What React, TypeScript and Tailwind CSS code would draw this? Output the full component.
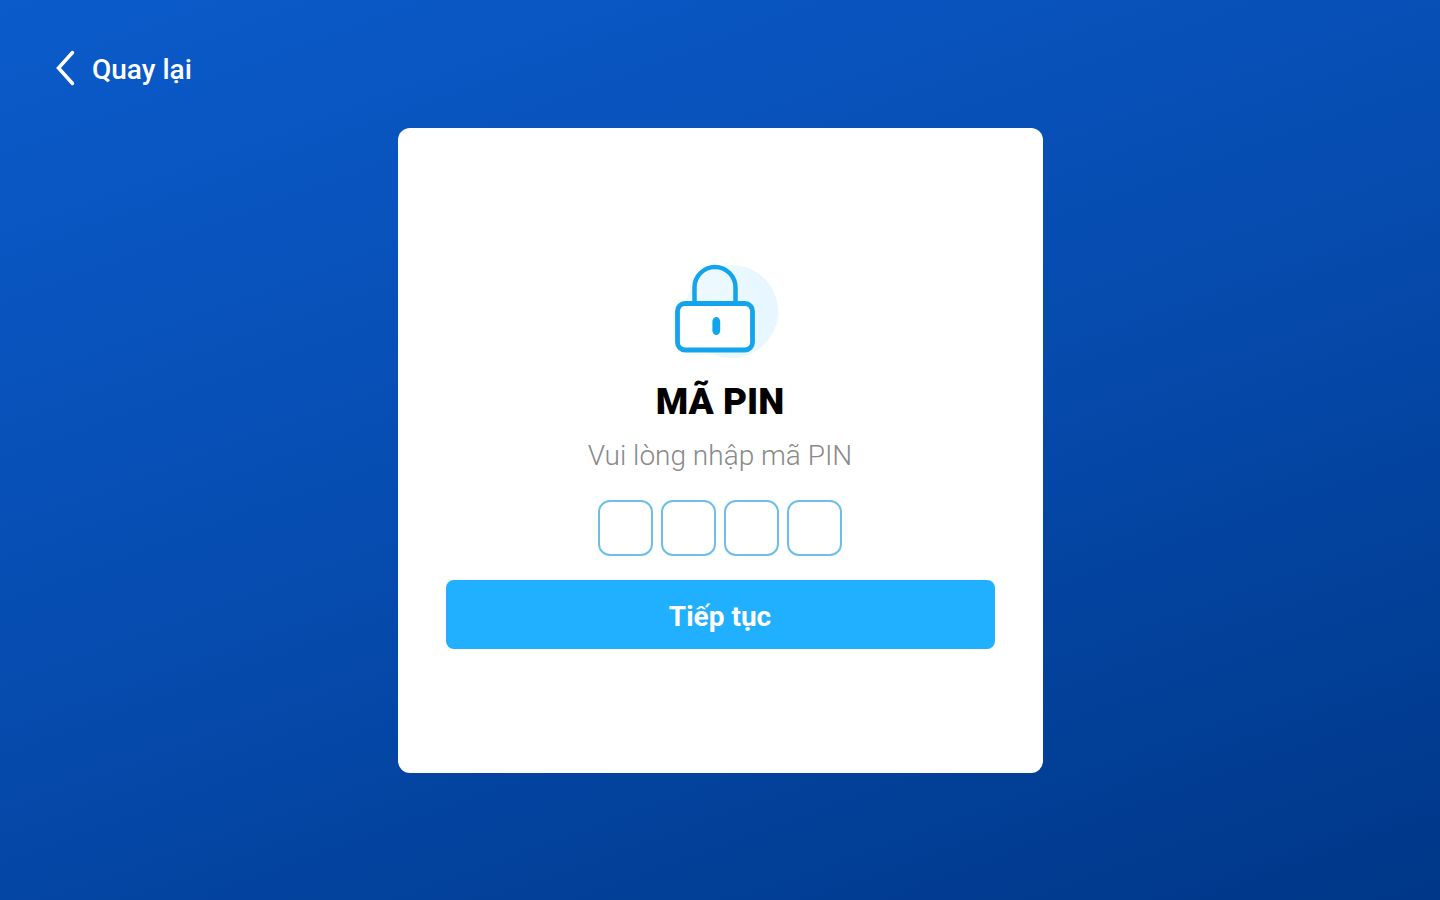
import { useRef, useState } from "react";

const PIN_LENGTH = 4;

function LockIcon() {
  return (
    <svg width="116" height="96" viewBox="0 0 116 96" fill="none" aria-hidden="true">
      <defs>
        <linearGradient id="halo" x1="116" y1="40" x2="24" y2="56" gradientUnits="userSpaceOnUse">
          <stop stopColor="#e6f6ff" />
          <stop offset="1" stopColor="#f0faff" />
        </linearGradient>
      </defs>
      <circle cx="69.5" cy="47.5" r="46.5" fill="url(#halo)" />
      <path d="M32.5 40V23.5a20.5 20.5 0 0 1 41 0V40" stroke="#12a5ee" strokeWidth="4.5" />
      <rect x="15.5" y="39.5" width="75" height="46.5" rx="7.5" fill="#fff" stroke="#12a5ee" strokeWidth="4.8" />
      <path d="M54.3 53c2.2 0 3.9 2.4 3.9 4.5v9c0 2.1-1.7 4.5-3.9 4.5s-3.9-2.4-3.9-4.5v-9c0-2.1 1.7-4.5 3.9-4.5z" fill="#12a5ee" />
    </svg>
  );
}

export default function App() {
  const [pin, setPin] = useState<string[]>(Array(PIN_LENGTH).fill(""));
  const inputsRef = useRef<(HTMLInputElement | null)[]>([]);

  const handleChange = (index: number, value: string) => {
    const digit = value.replace(/\D/g, "").slice(-1);
    setPin((prev) => prev.map((d, i) => (i === index ? digit : d)));
    if (digit) {
      inputsRef.current[index + 1]?.focus();
    }
  };

  const handleKeyDown = (index: number, e: React.KeyboardEvent<HTMLInputElement>) => {
    if (e.key === "Backspace" && !pin[index]) {
      inputsRef.current[index - 1]?.focus();
    }
  };

  return (
    <div className="min-h-screen flex flex-col bg-linear-160 from-[#0b5bcb] via-[#064bae] to-[#003788] font-[Roboto,sans-serif]">
      <header className="px-14 pt-11 pb-9">
        <button type="button" className="flex items-center gap-4 h-12 text-white text-[28px] font-medium">
          <svg width="20" height="36" viewBox="0 0 20 36" fill="none" aria-hidden="true">
            <path d="M16.5 2.5L2.5 18 16.5 33.5" stroke="currentColor" strokeWidth="3.5" strokeLinecap="round" />
          </svg>
          <span className="pt-1">Quay lại</span>
        </button>
      </header>

      <main className="flex-1 flex flex-col items-center px-6 pb-12">
        <form
          onSubmit={(e) => e.preventDefault()}
          className="w-full max-w-[645px] bg-white rounded-xl px-12 pt-34 pb-31 flex flex-col items-center"
        >
          <LockIcon />
          <h1 className="mt-5 text-[37px] leading-11 font-black text-black">MÃ PIN</h1>
          <p className="mt-3 text-[28px] leading-10 font-light text-[#8a8a8a]">Vui lòng nhập mã PIN</p>

          <div className="mt-6 flex gap-2">
            {pin.map((digit, index) => (
              <input
                key={index}
                ref={(el) => {
                  inputsRef.current[index] = el;
                }}
                type="password"
                inputMode="numeric"
                aria-label={`Số ${index + 1}`}
                value={digit}
                onChange={(e) => handleChange(index, e.target.value)}
                onKeyDown={(e) => handleKeyDown(index, e)}
                className="w-[55px] h-14 rounded-xl border-2 border-[#6dbfe9] text-center text-2xl text-black outline-none focus:border-[#12a5ee]"
              />
            ))}
          </div>

          <button
            type="submit"
            className="mt-6 w-full h-[69px] pt-1 rounded-lg bg-[#20b0ff] text-white text-[28px] font-bold"
          >
            Tiếp tục
          </button>
        </form>
      </main>
    </div>
  );
}
